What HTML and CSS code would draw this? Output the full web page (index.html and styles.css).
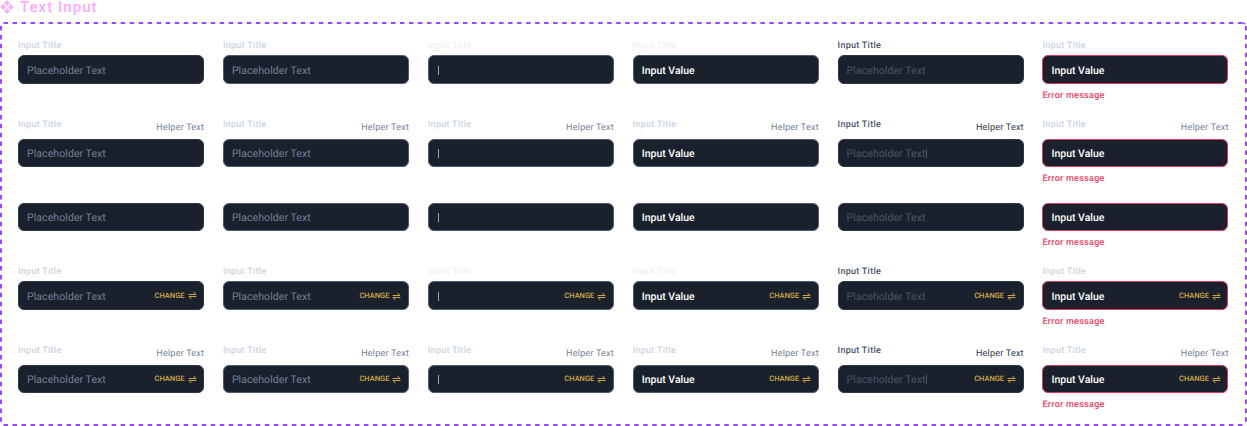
FILE: index.html
```
<!DOCTYPE html>
<html lang="en">
<head>
<meta charset="utf-8">
<title>Text Input</title>
<link rel="stylesheet" href="styles.css">
</head>
<body>
<svg class="defs" width="0" height="0" aria-hidden="true">
  <symbol id="swap" viewBox="0 0 9 9"><path d="M.6 3.5H8L5.6 1M8.4 5.5H1L3.4 8" fill="none" stroke="currentColor" stroke-width=".95"/></symbol>
</svg>
<h1 class="heading"><svg class="component" viewBox="0 0 14 14"><path d="M7 .2l2.9 2.9L7 6 4.100 3.100zM3.100 4.100L6 7 3.100 9.900.2 7zM10.900 4.100L13.800 7l-2.900 2.900L8 7zM7 8l2.900 2.900L7 13.800l-2.900-2.900z" fill="currentColor"/></svg><span>Text Input</span></h1>
<main class="sheet">
  <svg class="outline" width="1247" height="404" viewBox="0 0 1247 404" aria-hidden="true">
    <path d="M3.5 1H1243"/>
    <path class="side" d="M1246 4V400"/>
    <path d="M3.5 403H1243"/>
    <path class="side" d="M1 4V400"/>
    <path d="M1242.500 1Q1244.500 1 1245.300 2.300" class="corner"/>
  </svg>
  <section class="row">
    <div class="field rest"><div class="top"><label class="title">Input Title</label></div><div class="box"><span class="text">Placeholder Text</span></div></div>
    <div class="field hover"><div class="top"><label class="title">Input Title</label></div><div class="box"><span class="text">Placeholder Text</span></div></div>
    <div class="field focus"><div class="top"><label class="title faint">Input Title</label></div><div class="box"><span class="caret"></span></div></div>
    <div class="field filled"><div class="top"><label class="title faint">Input Title</label></div><div class="box"><span class="text">Input Value</span></div></div>
    <div class="field disabled"><div class="top"><label class="title">Input Title</label></div><div class="box"><span class="text">Placeholder Text</span></div></div>
    <div class="field error"><div class="top"><label class="title">Input Title</label></div><div class="box"><span class="text">Input Value</span></div><p class="message">Error message</p></div>
  </section>
  <section class="row helped">
    <div class="field rest"><div class="top"><label class="title">Input Title</label><span class="helper">Helper Text</span></div><div class="box"><span class="text">Placeholder Text</span></div></div>
    <div class="field hover"><div class="top"><label class="title">Input Title</label><span class="helper">Helper Text</span></div><div class="box"><span class="text">Placeholder Text</span></div></div>
    <div class="field focus"><div class="top"><label class="title">Input Title</label><span class="helper">Helper Text</span></div><div class="box"><span class="caret"></span></div></div>
    <div class="field filled"><div class="top"><label class="title">Input Title</label><span class="helper">Helper Text</span></div><div class="box"><span class="text">Input Value</span></div></div>
    <div class="field disabled"><div class="top"><label class="title">Input Title</label><span class="helper">Helper Text</span></div><div class="box"><span class="text">Placeholder Text</span><span class="caret"></span></div></div>
    <div class="field error"><div class="top"><label class="title">Input Title</label><span class="helper">Helper Text</span></div><div class="box"><span class="text">Input Value</span></div><p class="message">Error message</p></div>
  </section>
  <section class="row">
    <div class="field rest"><div class="box"><span class="text">Placeholder Text</span></div></div>
    <div class="field hover"><div class="box"><span class="text">Placeholder Text</span></div></div>
    <div class="field focus"><div class="box"><span class="caret"></span></div></div>
    <div class="field filled"><div class="box"><span class="text">Input Value</span></div></div>
    <div class="field disabled"><div class="box"><span class="text">Placeholder Text</span></div></div>
    <div class="field error"><div class="box"><span class="text">Input Value</span></div><p class="message">Error message</p></div>
  </section>
  <section class="row">
    <div class="field rest"><div class="top"><label class="title">Input Title</label></div><div class="box"><span class="text">Placeholder Text</span><span class="change raised">CHANGE<svg class="swap"><use href="#swap"/></svg></span></div></div>
    <div class="field hover"><div class="top"><label class="title">Input Title</label></div><div class="box"><span class="text">Placeholder Text</span><span class="change">CHANGE<svg class="swap"><use href="#swap"/></svg></span></div></div>
    <div class="field focus"><div class="top"><label class="title faint">Input Title</label></div><div class="box"><span class="caret"></span><span class="change">CHANGE<svg class="swap"><use href="#swap"/></svg></span></div></div>
    <div class="field filled"><div class="top"><label class="title faint">Input Title</label></div><div class="box"><span class="text">Input Value</span><span class="change">CHANGE<svg class="swap"><use href="#swap"/></svg></span></div></div>
    <div class="field disabled"><div class="top"><label class="title">Input Title</label></div><div class="box"><span class="text">Placeholder Text</span><span class="change">CHANGE<svg class="swap"><use href="#swap"/></svg></span></div></div>
    <div class="field error"><div class="top"><label class="title">Input Title</label></div><div class="box"><span class="text">Input Value</span><span class="change">CHANGE<svg class="swap"><use href="#swap"/></svg></span></div><p class="message">Error message</p></div>
  </section>
  <section class="row helped">
    <div class="field rest"><div class="top"><label class="title">Input Title</label><span class="helper">Helper Text</span></div><div class="box"><span class="text">Placeholder Text</span><span class="change">CHANGE<svg class="swap"><use href="#swap"/></svg></span></div></div>
    <div class="field hover"><div class="top"><label class="title">Input Title</label><span class="helper">Helper Text</span></div><div class="box"><span class="text">Placeholder Text</span><span class="change">CHANGE<svg class="swap"><use href="#swap"/></svg></span></div></div>
    <div class="field focus"><div class="top"><label class="title">Input Title</label><span class="helper">Helper Text</span></div><div class="box"><span class="caret"></span><span class="change">CHANGE<svg class="swap"><use href="#swap"/></svg></span></div></div>
    <div class="field filled"><div class="top"><label class="title">Input Title</label><span class="helper">Helper Text</span></div><div class="box"><span class="text">Input Value</span><span class="change">CHANGE<svg class="swap"><use href="#swap"/></svg></span></div></div>
    <div class="field disabled"><div class="top"><label class="title">Input Title</label><span class="helper">Helper Text</span></div><div class="box"><span class="text">Placeholder Text</span><span class="caret"></span><span class="change">CHANGE<svg class="swap"><use href="#swap"/></svg></span></div></div>
    <div class="field error"><div class="top"><label class="title">Input Title</label><span class="helper">Helper Text</span></div><div class="box"><span class="text">Input Value</span><span class="change">CHANGE<svg class="swap"><use href="#swap"/></svg></span></div><p class="message">Error message</p></div>
  </section>
</main>
</body>
</html>
```
FILE: styles.css
```
* { box-sizing: border-box; }
body {
  margin: 0;
  width: 1247px;
  height: 426px;
  overflow: hidden;
  background: #fff;
  font-family: Roboto, sans-serif;
  text-rendering: geometricPrecision;
}
/* Kept rendered at zero size so its symbols stay referenceable */
.defs { display: block; }
.heading {
  display: flex;
  align-items: center;
  gap: 6px;
  height: 22px;
  margin: 0;
  padding-bottom: 8px;
  color: #ffa8ff;
  font-size: 15px;
  line-height: 14px;
  font-weight: 500;
  letter-spacing: 1.05px;
}
.component { width: 14px; height: 14px; }
.sheet {
  position: relative;
  height: 404px;
  padding: 16px 18px 0;
  display: grid;
  grid-template-rows: 79px 85.6px 61.4px 79px 79px;
}
.outline {
  position: absolute;
  inset: 0;
  fill: none;
  stroke: #9747ff;
  stroke-width: 2;
  stroke-dasharray: 4.5 4.51;
}
.side { stroke-dasharray: 4.5 4.393; }
.corner { stroke-width: 1.4; stroke-dasharray: none; }
.row {
  display: grid;
  grid-template-columns: repeat(6, 186px);
  column-gap: 18.9px;
  align-items: start;
}
.top {
  display: flex;
  justify-content: space-between;
  align-items: flex-start;
  height: 17.4px;
}
.helped .top { height: 21.6px; }
.title, .helper {
  font-size: 9px;
  line-height: 16px;
  letter-spacing: .27px;
  white-space: nowrap;
}
.title { color: #cbd5e0; font-weight: 500; }
.title.faint { color: #edf2f7; }
.helper { margin-top: 3px; margin-right: -.2px; color: #718096; letter-spacing: .22px; }
.box {
  display: flex;
  align-items: center;
  height: 28.6px;
  padding: 1px 6.5px 0 8px;
  border: 1px solid #2d3748;
  border-radius: 6px;
  background: #1a202c;
}
.text {
  margin-top: 1px;
  color: #718096;
  font-size: 10.6px;
  line-height: 16px;
  letter-spacing: .03px;
  white-space: nowrap;
}
.caret { width: 1px; height: 9px; margin-left: 1px; background: #a0a0a0; }
.change {
  display: flex;
  align-items: center;
  gap: 3px;
  margin-left: auto;
  color: #d6ac45;
  font-size: 7.5px;
  line-height: 10px;
  font-weight: 500;
}
.raised { margin-bottom: 1px; }
.swap { width: 9px; height: 9px; }
.hover .box, .focus .box, .filled .box { border-color: #4f5d73; }
.disabled .box { border-color: #2d3748; }
.filled .text, .error .text { color: #fff; font-weight: 500; font-size: 10.5px; letter-spacing: 0; }
.disabled .title { color: #4a5568; }
.disabled .helper { color: #2d3748; }
.disabled .text { color: #4a5568; }
.disabled .caret { background: #4a5568; }
.error .box { border-color: #d93a5c; }
.message {
  margin: 5.6px 0 0;
  color: #f03e66;
  font-size: 9px;
  line-height: 12px;
  font-weight: 500;
  letter-spacing: .28px;
}
```
